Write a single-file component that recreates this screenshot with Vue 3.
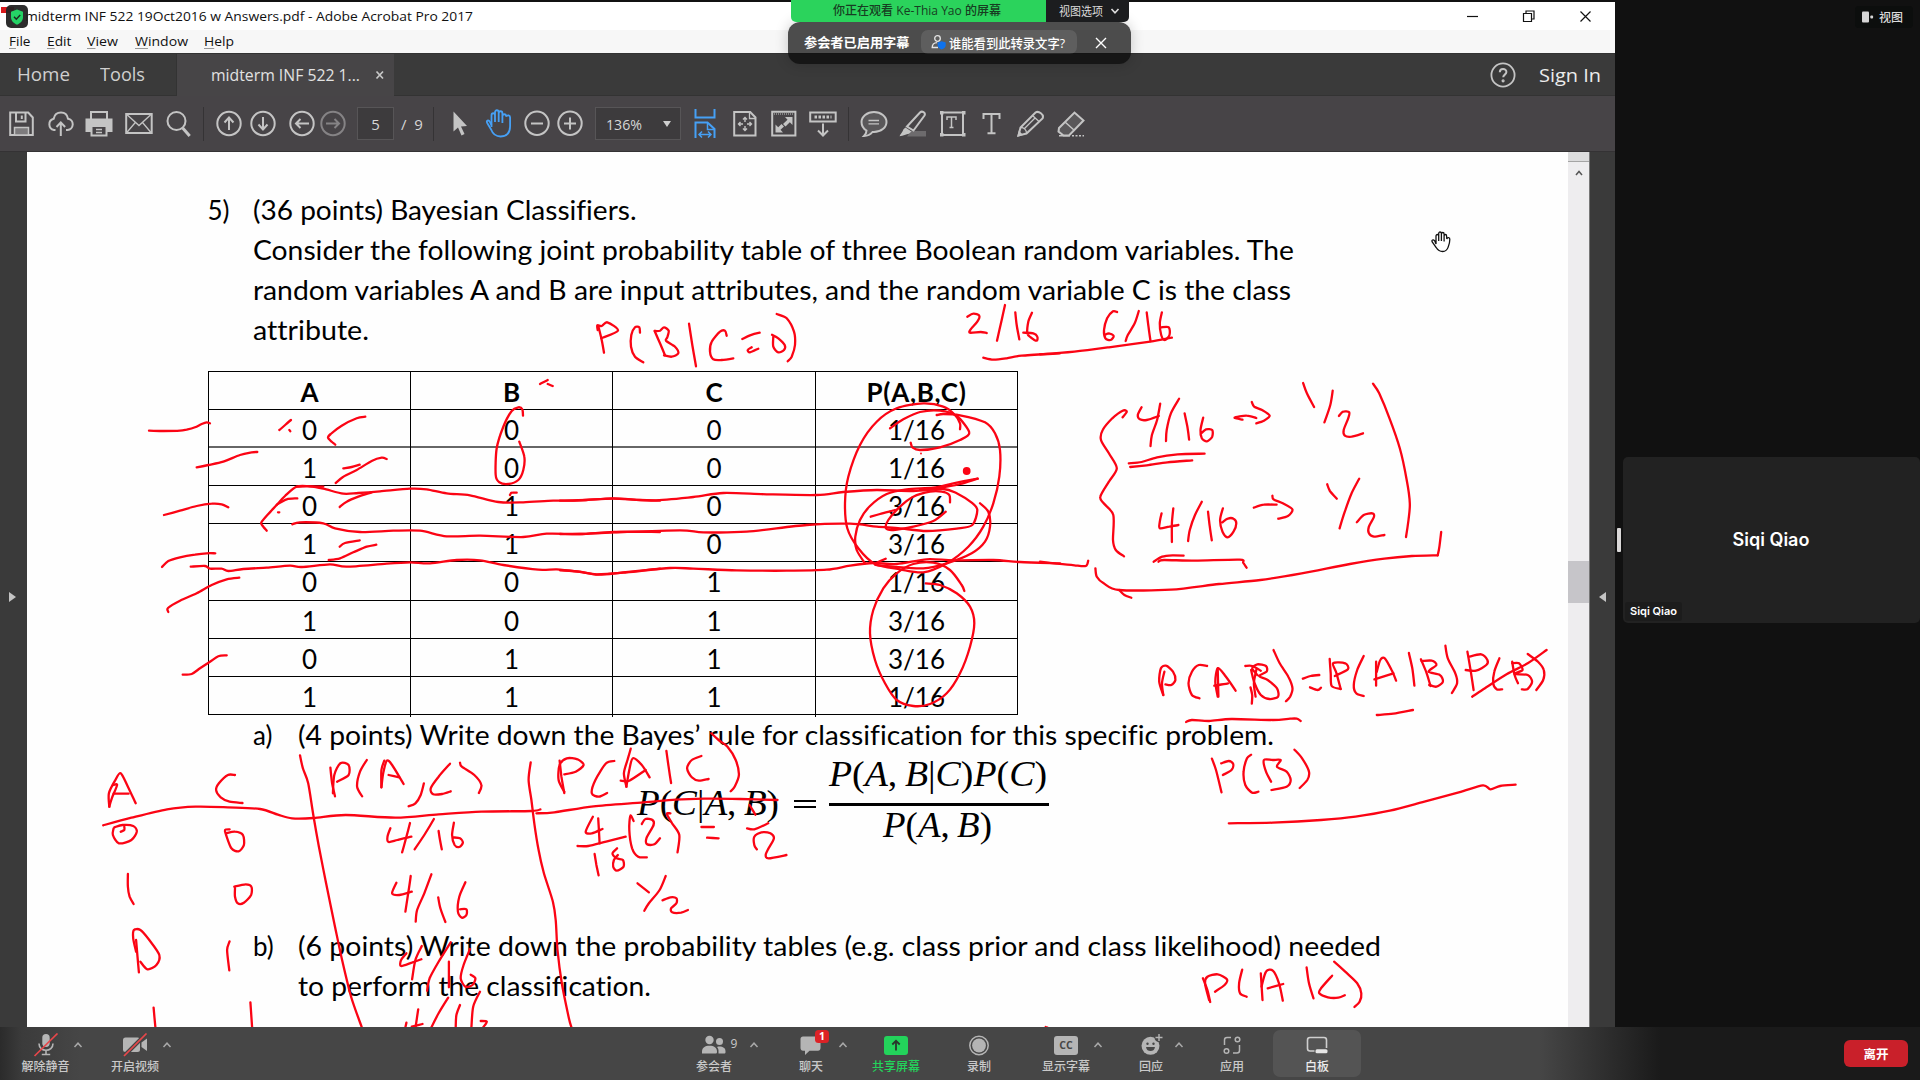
<script setup>
// Stretches or condenses a text run so it spans the given width.
const vFit = {
  mounted(el, { value }) {
    const natural = el.getBoundingClientRect().width
    el.style.width = value + 'px'
    el.style.transform = `scaleX(${value / natural})`
  },
}

const menus = [
  { t: 'File', gap: 8.5, w: 21.5 },
  { t: 'Edit', gap: 16.5, w: 24.5 },
  { t: 'View', gap: 16, w: 31 },
  { t: 'Window', gap: 17, w: 53 },
  { t: 'Help', gap: 16, w: 30 },
]

const rows = [
  ['0', '0', '0', '1/16'],
  ['1', '0', '0', '1/16'],
  ['0', '1', '0', '3/16'],
  ['1', '1', '0', '3/16'],
  ['0', '0', '1', '1/16'],
  ['1', '0', '1', '3/16'],
  ['0', '1', '1', '3/16'],
  ['1', '1', '1', '1/16'],
]

// Pen annotations: each sheet has an origin and a scale, each stroke is a list of points.
const sheets = [
  {
    x: 180, y: 360, sx: 3, sy: 3,
    strokes: [
      '-93,212 -50,213 0,212 20,209 45,202 65,192 80,187 90,190',
      '50,322 85,315 130,305 180,285 215,277 232,276',
      '-48,465 0,452 50,438 95,431 125,433 145,442',
      '-54,621 -35,603 0,592 45,584 80,580 106,580',
      '-35,756 -36,744 0,722 50,700 95,675 140,658 178,653',
      '8,944 35,942 60,925 90,905 115,889 140,886',
      '298,210 333,180', '328,210 331,214',
      '556,170 530,175 485,197 452,222 444,233 455,245 466,254',
      '467,369 490,350 530,330 575,303 605,293 620,297', '490,325 515,321 539,314',
      '430,380 390,379 350,380 315,408 290,435 265,462 244,488 250,500 260,512',
      '290,434 320,418 352,415', '294,457 298,457',
      '479,441 500,425 535,410 575,397',
      '350,380 390,379 430,386 490,401 535,399 600,394 690,386 740,388 800,400 870,406 955,426 1030,427 1120,422 1200,421 1300,415 1380,420 1440,422',
      '337,493 360,487 430,490 465,505 540,516 640,512 720,512 800,529 900,527 1030,531 1100,521 1200,522 1300,516 1440,516',
      '32,620 75,618 90,626 125,626 145,633 190,627 260,623 330,617 365,621 450,613 500,620 620,611 690,607 750,610 830,600 900,601 970,615 1075,629 1130,628 1190,634 1255,644 1330,637 1440,626',
      '479,560 495,549 539,541', '446,600 480,595 520,577 560,560 589,554',
      '1029,167 1027,148 1015,142 995,153 970,200 950,265 947,345 958,367 985,372 1015,360 1030,330 1033,290 1018,245',
      '990,405 995,398 1010,398', '1080,72 1103,60', '1103,72 1118,78',
    ],
  },
  {
    x: 560, y: 290, sx: 3, sy: 3,
    strokes: [
      '115,108 125,150 132,188', '113,120 112,106 125,108 142,97 174,122 124,145',
      '240,128 238,112 225,112 214,135 213,170 225,200 250,217',
      '284,123 300,160 315,196', '284,123 300,122 312,112 326,122 322,142 318,152 345,170 355,190 335,200 312,196',
      '387,101 397,165 408,229',
      '500,137 495,122 480,125 455,155 450,185 460,208 485,210 520,205',
      '547,147 570,136 599,128', '575,172 563,180 570,187 595,176',
      '640,140 640,170 655,187 672,180 674,165 655,145 636,134',
      '650,72 680,85 702,125 705,165 695,200 683,214',
      '1222,80 1240,71 1258,77 1252,95 1232,118 1230,128 1262,126 1280,129',
      '1335,45 1325,90 1311,152', '1366,67 1370,105 1378,148',
      '1416,68 1405,95 1402,130 1412,142 1430,152 1432,140 1420,130 1390,128',
      '1270,203 1300,209 1340,205 1385,197 1500,190',
      '1130,375 1150,372 1200,376 1275,397 1305,430 1320,480 1318,560 1300,640 1270,710 1225,770 1160,820 1090,847 1020,838 945,822 895,775 862,715 855,640 865,560 900,465 950,395 1010,355 1090,340 1150,350 1185,375 1200,400 1200,418',
      '990,415 1030,388 1080,366 1140,362 1190,378 1228,428 1200,450 1140,472 1080,480 1058,473 1052,458',
      '1253,566 1180,580 1120,593 1040,598 980,612 930,648 900,690 886,740 890,780 915,820',
      '1253,566 1200,582 1150,592 1080,598',
      '0,632 80,630 160,626 280,631 400,621 490,609 620,613 770,615 850,606 950,600 1060,603 1150,597 1190,610 1235,638 1252,660 1237,705 1190,716 1100,723 1020,715 950,710 870,701 740,705 560,725 430,727 360,721 160,727 60,732 0,732',
      '932,680 960,672 1005,660',
      '1170,637 1168,615 1145,605 1110,605 1060,620 1020,650 985,690 978,715 1000,720 1060,710 1120,693 1157,665',
      '1260,640 1285,665 1290,710 1275,755 1235,790 1160,820 1090,835 1000,830 945,824 977,806',
      '0,841 60,845 110,853 200,847 330,834 400,836 530,841 680,842 800,839 870,827 940,819 1010,822 1100,808 1180,811 1300,810 1380,816 1500,820',
      '1213,903 1205,885 1170,840 1120,818 1060,822 1010,850 970,895 940,960 930,1030 945,1110 975,1180 1010,1230 1060,1248 1110,1242 1160,1210 1200,1150 1230,1070 1243,1000 1230,950 1190,910 1140,885 1097,880',
    ],
  },
  {
    x: 1040, y: 290, sx: 2.904, sy: 3,
    strokes: [
      '224,66 212,64 195,85 186,120 190,145 205,150 214,138 200,130 188,135',
      '287,63 275,100 255,135 249,153', '310,67 315,110 321,153',
      '354,67 348,100 352,135 362,150 376,135 374,112 352,112',
      '0,193 100,185 200,172 320,155 383,143',
      '240,382 252,365 240,362 210,385 182,420 177,450 200,490 223,535 200,575 175,620 185,640 213,675 212,750 220,780 244,799',
      '295,352 284,375 290,388 310,390 345,378', '349,341 340,390 325,435 321,468',
      '404,326 380,370 368,420 366,453', '420,370 428,410 433,449',
      '474,383 466,420 470,445 485,454 500,440 500,420 482,418 468,430',
      '258,520 295,516 340,502 400,493 478,491', '262,531 310,526 370,517 442,511',
      '588,389 565,383 600,377 628,384', '615,336 622,350 645,360 667,377 650,392 628,400',
      '764,279 775,310 796,351', '850,302 843,345 826,397',
      '868,378 880,365 898,367 895,385 882,420 885,437 905,440 938,430',
      '967,281 985,310 1015,385 1045,475 1065,570 1074,640 1070,690 1063,741',
      '353,670 348,695 348,715 375,710 402,705', '387,655 383,700 383,756',
      '470,635 450,675 435,720 430,753', '488,665 493,710 499,751',
      '531,655 523,690 530,725 545,742 562,725 570,700 562,686 545,686 530,697',
      '621,653 650,644 687,644', '675,617 678,628 705,640 733,658 720,678 692,686',
      '834,583 842,603 862,626', '927,566 905,610 885,665 870,715',
      '920,697 940,675 965,670 970,680 955,710 955,730 970,740 1000,735',
      '330,815 355,800 385,796 417,797', '344,815 360,810 450,812 580,809 590,818 600,833',
      '161,835 165,860 185,880 230,900 380,899 520,882 640,870 760,850 900,822 1000,806 1080,798 1155,796',
      '1155,796 1160,770 1165,726', '230,900 245,915 265,923',
      '0,815 50,821 100,826 133,828 140,812',
    ],
  },
  {
    x: 60, y: 720, sx: 2.8, sy: 3,
    strokes: [
      '138,260 137,220 155,180 170,160 190,200 212,250', '150,195 160,195 145,235 138,260', '150,221 192,221',
      '490,165 470,165 445,190 437,210 450,232 475,245 511,249',
      '672,106 680,145 695,190 710,290 725,380 745,490 770,620 790,720 815,830 845,922',
      '121,316 200,293 300,268 380,260 470,262 560,267 610,284 650,295 710,294 800,285 940,293 1060,283 1180,275 1320,273 1345,268',
      '757,143 762,190 770,229', '764,220 768,165 785,130 808,135 808,165 776,185',
      '859,120 840,155 832,200 846,229',
      '900,202 905,160 915,122 930,135 962,192', '908,122 900,150 900,202', '920,165 950,172',
      '1019,190 1010,225 995,250 976,259',
      '1092,131 1060,170 1038,205 1045,223 1070,222 1094,214',
      '1120,128 1125,140 1160,165 1180,195 1173,219',
      '1318,127 1312,180 1320,240 1328,310 1340,390 1355,460 1380,545 1388,600 1393,690 1405,790 1425,895 1432,922',
      '150,325 148,345 165,370 200,360 215,335 205,318 175,315 152,322', '170,335 180,330 180,320',
      '475,328 462,330 465,345 480,385 500,394 515,375 512,345 490,335 465,340',
      '925,325 917,350 920,366 945,360 984,350', '980,309 970,350 958,397', '1047,297 1020,345 993,388',
      '1060,333 1064,360 1069,388', '1103,308 1098,345 1105,375 1118,381 1128,368 1120,355 1100,352',
      '190,462 190,500 195,530 206,552',
      '490,505 490,530 498,550 515,548 535,525 536,500 520,493 488,500',
      '942,488 930,520 950,525 985,515', '982,468 975,520 967,575', '1040,463 1020,520 1000,570 996,605',
      '1059,532 1065,565 1079,606', '1135,487 1118,530 1114,575 1125,593 1138,585 1138,568 1120,568',
      '213,660 217,710 221,757', '213,695 205,655 207,630 225,630 250,660 278,705 270,735 245,748 225,725',
      '475,664 468,690 474,751',
      '970,700 955,720 955,738 985,728 1012,718', '1013,678 995,720 986,778', '1094,667 1060,725 1035,775 1028,812',
      '1089,725 1089,802', '1148,687 1130,735 1122,775 1135,800 1155,795 1163,775 1150,764',
      '262,863 267,922', '533,847 538,922', '970,908 967,922', '1003,868 995,925', '985,920 1015,912',
      '1087,833 1060,880 1040,922', '1120,855 1110,885 1108,922', '1176,815 1157,860 1152,922', '1178,903 1195,905 1185,922',
    ],
  },
  {
    x: 540, y: 720, sx: 2.8, sy: 3,
    strokes: [
      '55,122 60,170 68,219', '68,215 52,180 55,135 75,115 105,118 122,135 100,155 68,163',
      '208,123 185,130 155,180 145,220 165,230 188,219',
      '254,86 245,120 235,160 242,200', '242,200 250,150 260,115 285,135 307,172', '226,182 250,182 296,150',
      '354,93 360,140 367,189', '452,108 425,120 412,145 425,172 445,182 472,177',
      '480,40 500,60 525,80 548,120 557,165 545,200 534,214',
      '-10,280 40,277 150,259 290,247 380,239 460,236 560,237 665,240',
      '148,290 128,335 145,340 175,327', '163,295 165,330 167,370', '105,378 135,378 185,365 240,350',
      '153,402 158,435 164,466', '216,385 203,400 215,415 232,420 234,440 215,452 205,440 207,420 218,405',
      '262,303 253,287 250,330 258,385 275,410 299,412',
      '285,312 295,297 315,300 318,315 298,355 300,373 320,373 336,355',
      '365,280 355,282 370,310 390,345 385,397', '452,321 487,321', '468,353 500,355',
      '587,255 603,284', '580,325 600,328 639,310',
      '607,388 600,375 600,350 620,337 645,340 655,355 640,385 632,405 640,415 690,405',
      '273,490 305,517', '352,468 335,510 305,550 292,572',
      '343,541 365,532 382,535 382,550 367,565 370,577 395,578 414,570', '1416,921 1421,923',
    ],
  },
  {
    x: 1080, y: 600, sx: 2.904, sy: 3,
    strokes: [
      '242,285 230,245 235,205 250,197 270,215 277,240 265,255 248,253', '245,215 238,250 242,285',
      '369,198 345,195 325,215 315,250 325,285 347,295',
      '400,290 393,245 400,205 420,225 452,272', '400,205 402,290', '390,257 430,250',
      '495,262 500,285 499,311',
      '480,198 500,198 525,212', '510,290 505,250 512,210', '497,210 507,250 525,285 550,297 575,290 572,265 545,240 520,228 542,215 540,198 515,193 500,205 515,225',
      '562,150 580,190 605,230 617,265 610,290 598,304',
      '647,236 670,228 695,225', '668,262 690,270 700,263',
      '725,177 728,220 731,258 757,267', '757,267 745,220 735,190 770,190 778,208 740,228',
      '824,168 805,210 795,255 802,280 824,288',
      '862,215 872,180 885,175 905,210 918,242', '860,185 860,257', '855,238 910,220',
      '955,159 965,205 971,257', '990,178 1005,215 1018,258',
      '992,183 1022,182 1035,195 1012,215 1045,225 1054,245 1035,260 1014,255',
      '1061,137 1068,175 1090,220 1095,250 1080,279',
      '1125,155 1135,215 1143,270', '1120,210 1150,212 1180,195 1183,180 1165,163 1130,170',
      '1218,175 1203,215 1200,250 1210,268 1226,268', '1255,185 1262,225 1272,250',
      '1255,190 1275,190 1285,210 1262,222 1300,225 1313,245 1300,267 1283,268',
      '1300,162 1330,185 1347,210 1345,240 1325,270', '1139,290 1180,262 1240,222 1300,190 1355,150',
      '862,345 910,341 967,330', '308,366 325,360 375,363 440,357 560,360 610,356 630,356 641,363',
      '383,476 395,510 411,577', '410,490 432,483 445,492 440,510 415,525',
      '497,464 485,475 475,515 480,555 500,578 518,575',
      '555,545 540,515 534,480 560,480 583,480 572,500 600,515 612,540 600,560 556,570',
      '623,449 645,475 665,515 660,540 638,564',
      '432,670 560,668 700,660 800,650 900,632 1000,605 1100,577 1170,556 1192,568 1220,558 1265,554',
      '357,1135 370,1170 378,1206', '375,1200 363,1150 370,1130 400,1123 427,1138 420,1155 392,1175',
      '471,1109 462,1150 465,1180 484,1190', '525,1120 530,1200', '527,1160 540,1115 560,1112 578,1150 589,1202',
      '545,1165 590,1152', '658,1102 665,1150 678,1195',
      '732,1127 700,1165 695,1180 720,1192 750,1193 769,1186',
      '738,1085 770,1115 805,1150 817,1180 812,1205 797,1221',
    ],
  },
]

// Catmull-Rom smoothing of a stroke into cubic segments.
function smooth(stroke, s) {
  const p = stroke.split(' ').map((pair) => {
    const [a, b] = pair.split(',').map(Number)
    return [s.x + a / s.sx, s.y + b / s.sy]
  })
  const f = (n) => n.toFixed(1)
  let d = `M${f(p[0][0])} ${f(p[0][1])}`
  for (let i = 0; i < p.length - 1; i++) {
    const a = p[i - 1] || p[i]
    const b = p[i]
    const c = p[i + 1]
    const e = p[i + 2] || c
    d += `C${f(b[0] + (c[0] - a[0]) / 7)} ${f(b[1] + (c[1] - a[1]) / 7)} ${f(c[0] - (e[0] - b[0]) / 7)} ${f(c[1] - (e[1] - b[1]) / 7)} ${f(c[0])} ${f(c[1])}`
  }
  return d
}
const ink = sheets.flatMap((s) => s.strokes.map((k) => smooth(k, s)))
</script>

<template>
  <div class="screen">
    <main class="share">
      <header class="titlebar">
        <span class="pdf-tag"></span>
        <span class="title"><span v-fit="448" class="fit">midterm INF 522 19Oct2016 w Answers.pdf - Adobe Acrobat Pro 2017</span></span>
        <span class="spacer"></span>
        <svg class="winctl" width="150" height="24" viewBox="0 0 150 24" fill="none" stroke="#111" stroke-width="1.2">
          <path d="M6 12.5h11" />
          <path d="M62.5 9.5h8v8h-8zM65 9V7h8v8h-2.2" />
          <path d="M119.5 7.5l10 10M129.500 7.500l-10 10" />
        </svg>
        <span class="shield">
          <svg width="14" height="16" viewBox="0 0 14 16"><path d="M7 .5l6 2.300v5.200c0 4-3 6.500-6 7.700-3-1.200-6-3.700-6-7.700V2.800z" fill="#25d366" /><path d="M4 7.800l2.300 2.400L10.200 6" fill="none" stroke="#1c2b20" stroke-width="1.500" /></svg>
        </span>
      </header>

      <nav class="menubar">
        <span v-for="m in menus" :key="m.t" class="menu" :style="{ marginLeft: m.gap + 'px' }"><span v-fit="m.w" class="fit"><u>{{ m.t[0] }}</u>{{ m.t.slice(1) }}</span></span>
      </nav>

      <div class="tabs">
        <div class="tab-left">
          <span v-fit="53" class="fit home">Home</span>
          <span v-fit="45" class="fit tools">Tools</span>
        </div>
        <div class="tab-active">
          <span v-fit="149" class="fit">midterm INF 522 1...</span>
          <svg width="10" height="10" viewBox="0 0 10 10" stroke="#c8c8c8" stroke-width="1.700"><path d="M1.500 1.500l6.500 7M8 1.500l-6.500 7" /></svg>
        </div>
        <span class="spacer"></span>
        <svg class="help" width="26" height="28" viewBox="0 0 26 28" fill="none" stroke="#c4c4c4" stroke-width="1.800"><circle cx="13" cy="14" r="11.600" /><path d="M9.800 11.300c0-4.300 6.600-4.200 6.600-.3 0 2.600-3.200 2.600-3.200 5.200" stroke-width="2" /><circle cx="13.100" cy="19.800" r=".7" /></svg>
        <span v-fit="62" class="fit signin">Sign In</span>
      </div>

      <div class="toolbar">
        <svg class="ic save" width="26" height="28" viewBox="0 0 26 28"><path d="M1.200 2.500h18l4.600 5V25H1.200z" /><path d="M7 3v8.500h9.500V3" /><path d="M12.800 5.500v3.500" /><path d="M5.500 25v-7.500h14V25z" class="dim" /></svg>
        <svg class="ic cloud" width="28" height="28" viewBox="0 0 28 28"><path d="M8.500 20H7a5.800 5.800 0 0 1-.3-11.300C7.500 4.500 10.500 2.500 14 2.500s6.300 2.300 7 6.200A5.700 5.700 0 0 1 20.500 20H19" /><path d="M13.800 26V12.500M9.500 17l4.300-4.600 4.300 4.600" /></svg>
        <svg class="ic print" width="28" height="28" viewBox="0 0 28 28"><path d="M6 9V2h16v7" /><path d="M1.500 9.500h25V21H22v-4H6v4H1.500z" fill="#c4c4c4" /><path d="M6.500 16v9.500h15V16z" fill="#474447" /><path d="M11 19.500h6M11 22.500h6" stroke-width="1.300" /></svg>
        <svg class="ic mail" width="28" height="28" viewBox="0 0 28 28"><path d="M1.200 4h25.500v19H1.200z" /><path d="M1.800 4.500L14 15.500 26 4.500M1.800 22.500l8.500-10M26 22.500l-8.500-10" stroke-width="1.300" /></svg>
        <svg class="ic find" width="26" height="28" viewBox="0 0 26 28"><circle cx="10.500" cy="11" r="9" /><path d="M16.700 18l7 8" stroke-width="3" /></svg>
        <i class="sep s1"></i>
        <svg class="ic up" width="26" height="28" viewBox="0 0 26 28"><circle cx="13" cy="13.500" r="11.700" /><path d="M13 20V8M8.500 12.500L13 7.500l4.500 5" /></svg>
        <svg class="ic down" width="26" height="28" viewBox="0 0 26 28"><circle cx="13" cy="13.500" r="11.700" /><path d="M13 7v12M8.500 14.500l4.500 5 4.500-5" /></svg>
        <svg class="ic back" width="26" height="28" viewBox="0 0 26 28"><circle cx="13" cy="13.500" r="11.700" /><path d="M20 13.500H7.500M11.500 9l-4.500 4.500 4.500 4.500" /></svg>
        <svg class="ic fwd" width="26" height="28" viewBox="0 0 26 28"><circle cx="13" cy="13.500" r="11.700" /><path d="M6 13.500h12.500M14.500 9l4.500 4.500-4.500 4.500" /></svg>
        <span class="field page">5</span>
        <span class="total">/&nbsp; 9</span>
        <i class="sep s2"></i>
        <svg class="ic arrow" width="18" height="28" viewBox="0 0 18 28"><path d="M1.500 1.500v20l4.500-4 3.500 8 3-1.500-3.500-7.500 6-.5z" fill="#c4c4c4" stroke="none" /></svg>
        <svg class="ic hand" width="28" height="30" viewBox="0 0 28 30"><path d="M7.500 18V6.500c0-3 3.500-3 3.500 0V13 3.500c0-3 3.700-3 3.700 0V13 4.500c0-3 3.700-3 3.700 0V14 7.500c0-3 3.700-3 3.700 0" /><path d="M22.100 7.500c1.500-2 4-1.300 4 1V17c0 7-3.500 10.500-9.500 10.500-5.500 0-8-3-9.500-7L3.500 14.500C1.500 11.500 4.500 10.500 6 13l1.500 3" /></svg>
        <svg class="ic minus" width="26" height="28" viewBox="0 0 26 28"><circle cx="13" cy="13.200" r="11.700" /><path d="M7 13.500h12" /></svg>
        <svg class="ic plus" width="26" height="28" viewBox="0 0 26 28"><circle cx="13" cy="13.200" r="11.700" /><path d="M7 13.500h12M13 7.500v12" /></svg>
        <span class="field zoom"><span v-fit="36" class="fit">136%</span><i class="tri"></i></span>
        <svg class="ic blue fitw" width="22" height="30" viewBox="0 0 22 30"><path d="M1.500 0v8.500h19V0" /><path d="M1.500 29V13.500h12l7 6.500v9" /><path d="M13.500 14v6.500h7" stroke-width="1.500" /><path d="M5 25.500h12M8 22.500l-3 3 3 3M14 22.500l3 3-3 3" stroke-width="1.500" /></svg>
        <svg class="ic fitp" width="24" height="28" viewBox="0 0 24 28"><path d="M1.200 2h16l5.300 5.500V25.500H1.200z" /><path d="M16.500 2.500v6h6" stroke-width="1.300" /><path d="M12 8v4M12 16v4M6 14h4M14 14h4M10 9.500L12 7.500l2 2M10 18.500l2 2 2-2M7.500 12l-2 2 2 2M16.500 12l2 2-2 2" stroke-width="1.400" /></svg>
        <svg class="ic full" width="26" height="28" viewBox="0 0 26 28"><path d="M1.200 1.800h23.200v23.700H1.200z" /><path d="M3 4h20" stroke-width="1" stroke-dasharray="1 1" /><path d="M14 7h7.500v8l-2.700-2.800-4.300 4.300-2.500-2.500L16.500 9.700zM4.500 22.500v-8l2.700 2.800 3.300-3.300 2.500 2.500-3.500 3.300 2.500 2.700z" fill="#c4c4c4" stroke="none" /></svg>
        <svg class="ic scroll" width="28" height="28" viewBox="0 0 28 28"><path d="M1.200 2.500h25.500v9H1.200z" /><path d="M5.500 7h17" stroke-width="3" stroke-dasharray="2.500 1.500" /><path d="M14 13.500v12M9 20.500l5 5 5-5" /></svg>
        <i class="sep s3"></i>
        <svg class="ic comment" width="28" height="28" viewBox="0 0 28 28"><path d="M14 2c7 0 12.500 4.500 12.500 10S21 22 14 22h-1.500c-2 2.500-5 4-8.500 4 1.500-1.500 2.500-3.500 2.500-5.500C3.300 18.700 1.500 15.500 1.500 12 1.500 6.500 7 2 14 2z" fill="#5a585a" /><path d="M8.500 10.500h10.500M8.500 13.800h10.500" stroke-width="1.300" /></svg>
        <svg class="ic marker" width="28" height="28" viewBox="0 0 28 28"><path d="M12 21h15v5.500H8z" fill="#6d6b6d" stroke="none" /><path d="M8 16.500L21 2.500c2-2 6 0 4.500 3L14.500 20.500z" /><path d="M6.500 17.500l6 4-2.500 2.300c-3 0-5.500 2.500-9.500 2.500 1-2.300 3-4 4-7z" fill="#c4c4c4" stroke="none" /></svg>
        <svg class="ic tbox" width="28" height="28" viewBox="0 0 28 28"><path d="M3 2.500h21v22.500H3z" /><path d="M1 1h3.500v3.500H1zM23 1h3.500v3.500H23zM1 23h3.500v3.500H1zM23 23h3.500v3.500H23z" fill="#c4c4c4" stroke="none" /><path d="M8 10V7h9v3M12.500 7v10.500M10.500 17.500h4" stroke-width="1.500" /></svg>
        <svg class="ic tee" width="20" height="28" viewBox="0 0 20 28"><path d="M1.500 9V4h16v5M9.500 4v19M5.500 23.200h8" /></svg>
        <svg class="ic pencil" width="28" height="28" viewBox="0 0 28 28"><path d="M1.500 25.500l2-8L18.500 2.500c3-2 9 2 7 6L9.500 23.500z" /><path d="M4 17.500c3 0 5.500 2.500 5.500 5.500M15.500 5.500l6.500 6M18 8L7 19" stroke-width="1.300" /><path d="M1.500 25.500l.8-3 2 2z" fill="#c4c4c4" /></svg>
        <svg class="ic eraser" width="30" height="28" viewBox="0 0 30 28"><path d="M2 18L17.500 2.500l9 8L12 25.500H6.500l-5-4z" fill="#5a585a" /><path d="M8 12l9.500 8.500M2 25.800h11" stroke-width="1.500" /><path d="M15 25.800h12" stroke-width="1.500" stroke-dasharray="2 1.500" /></svg>
      </div>

      <div class="body">
        <aside class="rail left"><i class="tri-r"></i></aside>
        <section class="doc">
          <p class="line q"><span class="num">5)</span><span v-fit="383.5" class="fit">(36 points) Bayesian Classifiers.</span></p>
          <p class="line in"><span v-fit="1041" class="fit">Consider the following joint probability table of three Boolean random variables. The</span></p>
          <p class="line in"><span v-fit="1038" class="fit">random variables A and B are input attributes, and the random variable C is the class</span></p>
          <p class="line in"><span v-fit="116" class="fit">attribute.</span></p>

          <div class="table">
            <div class="row head"><b>A</b><b>B</b><b>C</b><b class="wide">P(A,B,C)</b></div>
            <div v-for="(r, i) in rows" :key="i" class="row"><span v-for="(c, j) in r" :key="j">{{ c }}</span></div>
          </div>

          <p class="line sub"><span class="num">a)</span><span v-fit="976" class="fit">(4 points) Write down the Bayes’ rule for classification for this specific problem.</span></p>
          <div class="formula">
            <span class="lhs"><span v-fit="142" class="fit"><i>P</i>(<i>C</i>|<i>A</i>,&#8201;<i>B</i>)</span></span>
            <span class="eq"></span>
            <span class="frac">
              <span class="top"><span v-fit="218" class="fit"><i>P</i>(<i>A</i>,&#8201;<i>B</i>|<i>C</i>)<i>P</i>(<i>C</i>)</span></span>
              <span class="bot"><span v-fit="109" class="fit"><i>P</i>(<i>A</i>,&#8201;<i>B</i>)</span></span>
            </span>
          </div>
          <p class="line sub"><span class="num">b)</span><span v-fit="1083" class="fit">(6 points) Write down the probability tables (e.g. class prior and class likelihood) needed</span></p>
          <p class="line sub2"><span v-fit="353" class="fit">to perform the classification.</span></p>

          <svg class="ink" width="1541" height="875" viewBox="27 152 1541 875">
            <path v-for="(d, i) in ink" :key="i" :d="d" />
            <circle cx="966.700" cy="471" r="3.900" />
            <circle cx="921" cy="453.500" r=".9" />
          </svg>
          <svg class="cursor" width="20" height="22" viewBox="0 0 20 22"><path d="M5 13V5c0-2 2.700-2 2.700 0v5V2.500c0-2 2.700-2 2.700 0V10 3c0-2 2.700-2 2.700 0v7.500V5c0-2 2.500-2 2.500 0l.2 3c.5-2 3.200-2 3 .5 0 3-.6 5-1.600 7.500-.7 2-1.500 4.500-5.500 4.500-3.500 0-5-1.500-6.500-4L1.200 11c-1-2 1-3 2.500-1.200z" /></svg>
        </section>
        <div class="scrollbar">
          <i class="split"></i>
          <svg width="10" height="8" viewBox="0 0 10 8" fill="none" stroke="#555" stroke-width="1.500"><path d="M2 6l3-3.500L8 6" /></svg>
          <i class="thumb"></i>
        </div>
        <aside class="rail right"><i class="tri-l"></i></aside>
      </div>

      <div class="banner">
        <div class="banner-top">
          <span class="watching"><span v-fit="168" class="fit">你正在观看 Ke-Thia Yao 的屏幕</span></span>
          <span class="view-opt"><span v-fit="44" class="fit">视图选项</span><svg width="10" height="8" viewBox="0 0 10 8" fill="none" stroke="#ddd" stroke-width="1.600"><path d="M1.500 2L5 5.800 8.500 2" /></svg></span>
        </div>
        <div class="notice">
          <span v-fit="105.5" class="fit">参会者已启用字幕</span>
          <span class="who">
            <svg width="16" height="16" viewBox="0 0 16 16"><g fill="none" stroke="#e4e4e4" stroke-width="1.300"><circle cx="6.500" cy="4.500" r="2.800" /><path d="M7 13.500H1.200c0-3 2-4.700 5-4.800" /></g><path d="M10.700 7.200l4 1.400v2.900c0 2-2 3.200-4 4-2-.8-4-2-4-4V8.600z" fill="#0e72ed" /></svg>
            <span v-fit="116" class="fit">谁能看到此转录文字?</span>
          </span>
          <svg class="x" width="12" height="12" viewBox="0 0 12 12" stroke="#fff" stroke-width="1.400"><path d="M1 1l10 10M11 1L1 11" /></svg>
        </div>
      </div>
    </main>

    <aside class="side">
      <span class="viewbtn"><svg width="12" height="12" viewBox="0 0 12 12" fill="#d6d6d6"><rect x="0" y=".5" width="7" height="11" rx="1" /><rect x="8.300" y="4.500" width="2.800" height="3" rx="1" /></svg>视图</span>
      <i class="grip"></i>
      <div class="tile">
        <span class="big">Siqi Qiao</span>
        <span class="small">Siqi Qiao</span>
      </div>
    </aside>

    <footer class="dock">
      <div class="item mic">
        <svg width="26" height="24" viewBox="0 0 26 24"><rect x="9.300" y="1" width="7.400" height="13" rx="3.700" fill="#b5b5b5" /><path d="M6 10.500c0 9 14 9 14 0M13 17.500V21M8.800 21.500h8.400" fill="none" stroke="#b5b5b5" stroke-width="1.600" /><path d="M1.500 23L24.500 .5" stroke="#e8474a" stroke-width="1.700" /></svg>
        <span>解除静音</span>
      </div>
      <svg class="car c1" viewBox="0 0 10 8"><path d="M1.500 6L5 2.200 8.500 6" /></svg>
      <div class="item vid">
        <svg width="26" height="24" viewBox="0 0 26 24"><rect x="1" y="4.500" width="17" height="14.500" rx="2.500" fill="#b5b5b5" /><path d="M19.500 9.500L25 5.500V18l-5.500-4z" fill="#b5b5b5" /><path d="M2 23L24.500 .5" stroke="#464646" stroke-width="4" /><path d="M2 23L24.500 .5" stroke="#e8474a" stroke-width="1.700" /></svg>
        <span>开启视频</span>
      </div>
      <svg class="car c2" viewBox="0 0 10 8"><path d="M1.500 6L5 2.200 8.500 6" /></svg>
      <div class="item people">
        <svg width="26" height="24" viewBox="0 0 26 24" fill="#b5b5b5"><circle cx="8.500" cy="7" r="4.200" /><path d="M1 20.500v-2c0-4 3-5.800 7.500-5.800s7.500 1.800 7.500 5.800v.5c0 1-.7 1.500-1.500 1.500z" /><circle cx="18.500" cy="8.500" r="3.500" /><path d="M17.500 20.500v-3c0-1.500-.7-2.800-1.500-3.600 4.500-1 8.500.6 8.500 4.300v1c0 .8-.5 1.300-1.300 1.300z" /></svg>
        <em>9</em>
        <span>参会者</span>
      </div>
      <svg class="car c3" viewBox="0 0 10 8"><path d="M1.500 6L5 2.200 8.500 6" /></svg>
      <div class="item chat">
        <svg width="24" height="24" viewBox="0 0 24 24"><path d="M4 3.500h15c1.500 0 2.500 1 2.500 2.500v9c0 1.500-1 2.700-2.500 2.700h-8.500L6 22v-4.300H4C2.500 17.700 1.500 16.500 1.500 15V6c0-1.500 1-2.500 2.500-2.500z" fill="#b5b5b5" /></svg>
        <b>1</b>
        <span>聊天</span>
      </div>
      <svg class="car c4" viewBox="0 0 10 8"><path d="M1.500 6L5 2.200 8.500 6" /></svg>
      <div class="item shareit">
        <svg width="24" height="24" viewBox="0 0 24 24"><rect x="0" y="3" width="24" height="19" rx="3" fill="#23d35b" /><path d="M12 17.500V8.500M8.300 11.500L12 7.800l3.700 3.700" fill="none" stroke="#29352c" stroke-width="1.800" /></svg>
        <span>共享屏幕</span>
      </div>
      <div class="item rec">
        <svg width="24" height="24" viewBox="0 0 24 24"><circle cx="12" cy="12.500" r="9.200" fill="none" stroke="#b5b5b5" stroke-width="1.500" /><circle cx="12" cy="12.500" r="6.900" fill="#b5b5b5" /></svg>
        <span>录制</span>
      </div>
      <div class="item cc">
        <svg width="24" height="24" viewBox="0 0 24 24"><rect x="0" y="3" width="24" height="19" rx="3" fill="#b5b5b5" /><text x="12" y="16.300" text-anchor="middle" font-size="10.500" font-weight="700" fill="#464646">CC</text></svg>
        <span>显示字幕</span>
      </div>
      <svg class="car c5" viewBox="0 0 10 8"><path d="M1.500 6L5 2.200 8.500 6" /></svg>
      <div class="item react">
        <svg width="24" height="24" viewBox="0 0 24 24"><circle cx="11.500" cy="12.800" r="9" fill="#b5b5b5" /><circle cx="20" cy="4.500" r="4.500" fill="#464646" /><path d="M20 1v7M16.500 4.500h7" stroke="#b5b5b5" stroke-width="1.400" /><g fill="#464646"><circle cx="8.500" cy="10.800" r="1.200" /><circle cx="14.500" cy="10.800" r="1.200" /><path d="M7 14h9c-.5 3-2.300 4-4.500 4S7.500 17 7 14z" /></g></svg>
        <span>回应</span>
      </div>
      <svg class="car c6" viewBox="0 0 10 8"><path d="M1.500 6L5 2.200 8.500 6" /></svg>
      <div class="item apps">
        <svg width="20" height="24" viewBox="0 0 20 24" fill="none" stroke="#b5b5b5" stroke-width="1.500"><path d="M2.500 12V7c0-1.500 1-2.500 2.500-2.500h4M17.500 12v5.500c0 1.500-1 2.500-2.500 2.500h-4" /><circle cx="15.500" cy="6.500" r="2.300" /><circle cx="4.500" cy="18" r="2.300" /></svg>
        <span>应用</span>
      </div>
      <div class="item board">
        <svg width="24" height="24" viewBox="0 0 24 24"><path d="M9.500 18H5c-1.500 0-2.500-1-2.500-2.500V7c0-1.500 1-2.500 2.500-2.500h14c1.500 0 2.500 1 2.500 2.500v8" fill="none" stroke="#cfcfcf" stroke-width="1.600" /><rect x="10.500" y="16.300" width="12" height="4" rx="1.500" fill="#e6e6e6" /></svg>
        <span>白板</span>
      </div>
      <span class="spacer"></span>
      <button class="leave">离开</button>
    </footer>
  </div>
</template>

<style>
body { margin: 0; background: #111; }
</style>

<style scoped>
.screen { position: relative; display: grid; grid-template-columns: 1615px 305px; grid-template-rows: 1027px 53px; width: 1920px; height: 1080px; overflow: hidden; background: #111; font-family: "Open Sans", "Noto Sans CJK SC", sans-serif; }
.fit { display: inline-block; white-space: nowrap; transform-origin: 0 50%; }
.spacer { flex: 1; }
svg { display: block; flex: none; }
p { margin: 0; }

.share { position: relative; display: flex; flex-direction: column; padding-top: 2px; min-height: 0; }
.titlebar { position: relative; display: flex; align-items: center; height: 28px; background: #fff; font-size: 13.500px; color: #111; }
.pdf-tag { width: 13px; height: 6px; margin: -12px 0 0 1px; background: #d8181b; }
.title { margin-left: 11px; line-height: 28px; }
.winctl { margin: 0 4px 0 0; width: 150px; }
.shield { position: absolute; left: 6px; top: 3px; width: 22px; height: 23px; border-radius: 5px; background: rgba(35, 35, 35, 0.95); display: flex; align-items: center; justify-content: center; }
.menubar { display: flex; height: 23px; background: #f7f7f7; font-size: 13.500px; line-height: 23px; color: #111; }
.menu u { text-decoration-color: #999; text-underline-offset: 2px; }

.tabs { display: flex; align-items: center; height: 43px; background: #3a3a3a; border-top: 1px solid #333; box-sizing: border-box; box-shadow: inset 0 -1px #333; color: #cfcfcf; }
.tab-left { display: flex; width: 177px; font-size: 18.500px; line-height: 39px; height: 42px; }
.home { margin-left: 17px; }
.tools { margin-left: 30px; }
.tab-active { display: flex; align-items: center; width: 217px; height: 42px; background: #474547; box-shadow: -1px 0 #333; font-size: 16.500px; color: #e2e2e2; }
.tab-active .fit { margin-left: 34px; line-height: 42px; }
.tab-active svg { margin: 0 0 0 15px; }
.help { margin-right: 23px; }
.signin { margin: -2px 14px 0 0; font-size: 18.500px; color: #ececec; }

.toolbar { display: flex; align-items: center; height: 56px; box-sizing: border-box; background: #474447; border-bottom: 1px solid #343234; color: #d6d6d6; font-size: 15px; }
.ic { fill: none; stroke: #c4c4c4; stroke-width: 2; }
.ic .dim { fill: #7d7b7d; stroke-width: 1.500; }
.save { margin-left: 9px; }
.cloud { margin-left: 12px; }
.print { margin-left: 10px; }
.mail { margin-left: 12px; }
.find { margin-left: 13px; }
.sep { width: 1px; height: 34px; background: #353335; }
.s1 { margin-left: 11px; }
.up { margin-left: 12px; }
.down { margin-left: 8px; }
.back { margin-left: 13px; }
.fwd { margin-left: 5px; stroke: #858385; }
.field { display: flex; align-items: center; height: 33px; box-sizing: border-box; background: #3d3b3d; border: 1px solid #575557; }
.page { width: 37px; margin-left: 11px; justify-content: center; }
.total { width: 32px; margin-left: 7px; white-space: nowrap; }
.s2 { margin-left: 0; }
.arrow { margin-left: 18px; }
.hand { margin-left: 14px; stroke: #46a0f5; stroke-width: 1.800; }
.minus { margin-left: 12px; }
.plus { margin-left: 7px; }
.zoom { width: 86px; margin-left: 12px; padding-left: 10px; font-size: 15px; }
.tri { margin-left: 21px; border: 4.500px solid transparent; border-top: 6px solid #cfcfcf; border-bottom: 0; }
.fitw { margin-left: 13px; }
.blue { stroke: #46a0f5; }
.fitp { margin-left: 17px; }
.full { margin-left: 14px; }
.scroll { margin-left: 12px; }
.s3 { margin-left: 11px; }
.comment { margin-left: 11px; }
.marker { margin-left: 11px; }
.tbox { margin-left: 12px; }
.tee { margin-left: 15px; }
.pencil { margin-left: 15px; }
.eraser { margin-left: 12px; }

.body { display: flex; flex: 1; min-height: 0; }
.rail { background: #3a3a3a; display: flex; justify-content: center; }
.left { width: 27px; }
.right { width: 26px; border-left: 1px solid #777; box-sizing: border-box; }
.tri-r { align-self: flex-start; margin: 440px 3px 0 0; border: 5.500px solid transparent; border-left: 7px solid #c4c4c4; border-right: 0; }
.tri-l { align-self: flex-start; margin: 440px 1px 0 0; border: 5.500px solid transparent; border-right: 7px solid #c4c4c4; border-left: 0; }
.doc { position: relative; width: 1541px; height: 875px; padding-top: 38px; box-sizing: border-box; overflow: hidden; background: #fefefe; color: #000; font-family: Lato, "Open Sans", sans-serif; font-size: 26px; font-variant-ligatures: none; }
.line { display: flex; height: 40px; line-height: 41px; }
.q { padding-left: 180.500px; }
.q .num { width: 45px; }
.in { padding-left: 225.500px; }
.sub { padding-left: 226px; line-height: 40px; }
.sub .num { width: 45px; }
.sub2 { padding-left: 271px; line-height: 40px; }
.table { width: 810px; margin: 21px 0 0 181px; border: 1px solid #000; border-bottom: 0; box-sizing: border-box; }
.row { display: grid; grid-template-columns: 201px 202px 203px 1fr; height: 38.100px; box-sizing: border-box; border-bottom: 1px solid #000; text-align: center; line-height: 40px; }
.row:nth-child(2) { border-bottom: 2px solid #666; }
.row > * + * { border-left: 1px solid #000; }
.wide { letter-spacing: 0.7px; }
.formula { display: flex; height: 171px; padding-left: 610px; font-family: "Liberation Serif", serif; font-size: 36px; line-height: 40px; }
.lhs { width: 157px; margin-top: 28px; }
.eq { width: 22px; height: 8px; margin: 45px 13px 0 0; border: solid #000; border-width: 2px 0; box-sizing: border-box; }
.frac { width: 220px; height: 100px; }
.top { display: flex; height: 48px; border-bottom: 3px solid #000; box-sizing: content-box; }
.bot { display: flex; padding-left: 54px; }
.top .fit { margin-top: -1px; }
.bot .fit { margin-top: -1px; }
.ink { position: absolute; left: 0; top: 0; fill: none; stroke: #fb0414; stroke-width: 2.300; stroke-linecap: round; stroke-linejoin: round; }
.ink circle { fill: #fb0414; stroke: none; }
.cursor { position: absolute; left: 1404px; top: 79px; fill: #fff; stroke: #111; stroke-width: 1.300; }
.scrollbar { display: flex; flex-direction: column; align-items: center; width: 21px; background: #eeedef; }
.split { width: 100%; height: 10px; background: #dcdcdd; border-bottom: 1px solid #a5a5a5; box-sizing: border-box; }
.scrollbar svg { margin-top: 7px; }
.thumb { width: 100%; height: 42px; margin-top: 384px; background: #c6c5c9; }

.banner { position: absolute; left: 788px; top: 0; width: 343px; }
.banner-top { display: flex; height: 22px; margin: 0 2px 0 3px; border-radius: 0 0 5px 5px; overflow: hidden; line-height: 21px; font-size: 12.500px; }
.watching { width: 255px; padding-left: 42px; box-sizing: border-box; background: #2bd35c; color: #173d22; font-weight: 500; }
.view-opt { display: flex; align-items: center; flex: 1; padding-left: 13px; background: #1c1d1f; color: #dcdcdc; font-size: 12px; }
.view-opt svg { margin-left: 7px; }
.notice { display: flex; align-items: center; height: 42px; padding-left: 16px; box-sizing: border-box; border-radius: 12px; background: rgba(8, 8, 8, 0.716); color: #fff; font-size: 13px; font-weight: 700; box-shadow: 0 0 14px rgba(0, 0, 0, 0.2); }
.notice > .fit { margin-top: -4px; }
.who { display: flex; align-items: center; width: 156px; height: 24px; margin: -2px 0 0 11px; padding-left: 10px; box-sizing: border-box; border-radius: 7px; background: rgba(255, 255, 255, 0.1); font-weight: 500; }
.who .fit { margin-left: 2px; }
.x { margin: -1px 0 0 18px; }

.side { position: relative; display: flex; flex-direction: column; }
.viewbtn { display: flex; align-items: center; align-self: flex-end; gap: 5px; width: 58px; height: 22px; margin: 6px 7px 0 0; padding-left: 7px; box-sizing: border-box; border-radius: 4px; background: #0c0e0d; color: #dcdcdc; font-size: 12px; font-weight: 500; }
.grip { position: absolute; left: 2px; top: 528px; width: 4px; height: 24px; border-radius: 1px; background: #dad8d8; }
.tile { position: relative; display: flex; align-items: center; justify-content: center; height: 166px; margin: 429px 0 0 8px; border-radius: 5px; background: #222; color: #fff; font-family: Inter, sans-serif; }
.big { margin: -2px 1px 0 0; font-size: 18px; font-weight: 600; }
.small { position: absolute; left: 2px; bottom: 2px; padding: 0 5px; height: 19px; line-height: 19px; border-radius: 3px; background: #1c1c1c; font-size: 11px; font-weight: 600; }

.dock { grid-column: 1 / 3; display: flex; align-items: flex-start; background: linear-gradient(90deg, #2b2b2b 0, #3b3b3b 22px, #464646 80px, #464646 1540px, #1a1a1a 1660px, #1a1a1a 100%); color: #c9c9c9; }
.item { position: relative; display: flex; flex-direction: column; align-items: center; flex: none; height: 53px; padding-top: 6px; box-sizing: border-box; font-size: 12px; line-height: 18px; }
.item span { font-family: "Noto Sans CJK SC", sans-serif; font-weight: 500; white-space: nowrap; }
.item em { position: absolute; left: 34.500px; top: 8px; font-style: normal; font-size: 12px; }
.car { width: 10px; height: 8px; fill: none; stroke: #a8a8a8; stroke-width: 1.500; margin-top: 14px; }
.mic { width: 48px; margin-left: 21.500px; }
.c1 { margin-left: 3.500px; }
.vid { width: 48px; margin-left: 28px; }
.c2 { margin-left: 3px; }
.people { width: 36px; margin-left: 524px; }
.c3 { margin-left: 17px; }
.chat { width: 36px; margin-left: 34px; }
.chat b { position: absolute; left: 22px; top: 3px; width: 14px; height: 13px; border-radius: 3.500px; background: #dc2226; color: #fff; font-size: 10.500px; line-height: 13px; text-align: center; }
.c4 { margin-left: 9px; }
.shareit { width: 48px; margin-left: 24px; color: #23d35b; }
.rec { width: 24px; margin-left: 47px; }
.cc { width: 48px; margin-left: 51px; }
.c5 { margin-left: 3px; }
.react { width: 24px; margin-left: 36px; }
.c6 { margin-left: 11px; }
.apps { width: 24px; margin-left: 36px; }
.board { width: 88px; height: 47px; margin: 3px 0 0 29px; padding-top: 3px; border-radius: 7px; background: #545454; color: #ececec; }
.leave { width: 64px; height: 27px; margin: 13px 12px 0 0; padding: 0; border: 0; border-radius: 6px; background: #c9202a; color: #fff; font: 700 12.500px "Noto Sans CJK SC", sans-serif; }
</style>
